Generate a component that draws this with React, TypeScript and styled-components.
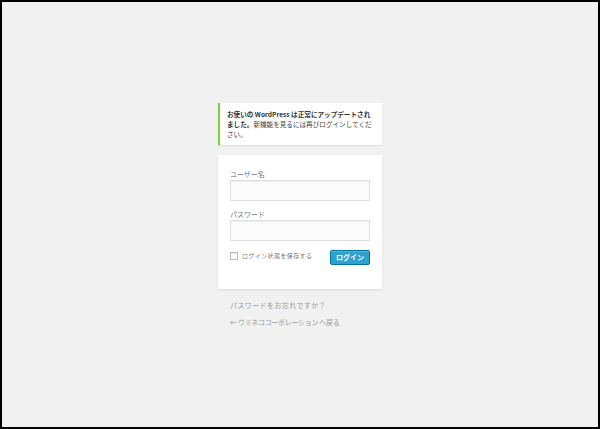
import styled, { createGlobalStyle } from 'styled-components';

const GlobalStyle = createGlobalStyle`
  html, body {
    margin: 0;
    padding: 0;
  }
  body {
    font-family: 'Noto Sans CJK JP', 'Open Sans', sans-serif;
    -webkit-font-smoothing: antialiased;
  }
`;

const Page = styled.div`
  box-sizing: border-box;
  width: 600px;
  height: 429px;
  border: 2px solid #000;
  background: #f1f1f1;
  padding-top: 101px;
`;

const Login = styled.div`
  width: 164px;
  margin: 0 auto;
`;

const Notice = styled.p`
  margin: 0 0 10px;
  background: #fff;
  border-left: 2px solid #7ad03a;
  box-shadow: 0 1px 1px rgba(0, 0, 0, 0.08);
  padding: 6px 8px 6px 7px;
  font-size: 6.6px;
  line-height: 10px;
  color: #444;

  strong {
    font-weight: 700;
    color: #333;
  }
`;

const Form = styled.form`
  background: #fff;
  box-shadow: 0 1px 2px rgba(0, 0, 0, 0.1);
  padding: 14px 12px 24px;
  margin: 0;
`;

const Label = styled.label`
  display: block;
  font-size: 7px;
  line-height: 10px;
  color: #777;
`;

const TextInput = styled.input<{ $last?: boolean }>`
  display: block;
  box-sizing: border-box;
  width: 100%;
  height: 21px;
  margin: 1px 0 ${(p) => (p.$last ? '9px' : '8px')};
  border: 1px solid #ddd;
  background: #fbfbfb;
  box-shadow: inset 0 1px 1px rgba(0, 0, 0, 0.05);
  outline: none;
  padding: 0 4px;
  font-size: 10px;
`;

const Row = styled.div`
  display: flex;
  align-items: flex-start;
  justify-content: space-between;
`;

const Remember = styled.label`
  display: flex;
  align-items: center;
  gap: 4px;
  margin-top: 1px;
  font-size: 6px;
  line-height: 10px;
  letter-spacing: 0.4px;
  color: #777;
`;

const Check = styled.span`
  box-sizing: border-box;
  width: 8px;
  height: 8px;
  border: 1px solid #bbb;
  background: #fff;
  box-shadow: inset 0 1px 1px rgba(0, 0, 0, 0.08);
`;

const Button = styled.button`
  box-sizing: border-box;
  width: 40px;
  height: 15px;
  padding: 0;
  border: 1px solid #0074a2;
  border-radius: 2px;
  background: #2ea2cc;
  box-shadow: inset 0 1px 0 rgba(120, 200, 230, 0.5);
  color: #fff;
  font-family: inherit;
  font-size: 7px;
  font-weight: 700;
  line-height: 13px;
`;

const Nav = styled.p<{ $gap: number; $spacing?: number }>`
  margin: ${(p) => p.$gap}px 0 0;
  padding-left: 12px;
  font-size: 7px;
  line-height: 10px;
  letter-spacing: ${(p) => p.$spacing ?? 0}px;
  color: #999;
`;

export default function App() {
  return (
    <>
      <GlobalStyle />
      <Page>
        <Login>
          <Notice>
            <strong>お使いの WordPress は正常にアップデートされました。</strong>
            新機能を見るには再びログインしてください。
          </Notice>
          <Form>
            <Label>ユーザー名</Label>
            <TextInput type="text" />
            <Label>パスワード</Label>
            <TextInput type="password" $last />
            <Row>
              <Remember>
                <Check />
                ログイン状態を保存する
              </Remember>
              <Button type="button">ログイン</Button>
            </Row>
          </Form>
          <Nav $gap={11} $spacing={0.4}>パスワードをお忘れですか？</Nav>
          <Nav $gap={7} $spacing={-0.3}>← ウミネココーポレーション へ戻る</Nav>
        </Login>
      </Page>
    </>
  );
}
